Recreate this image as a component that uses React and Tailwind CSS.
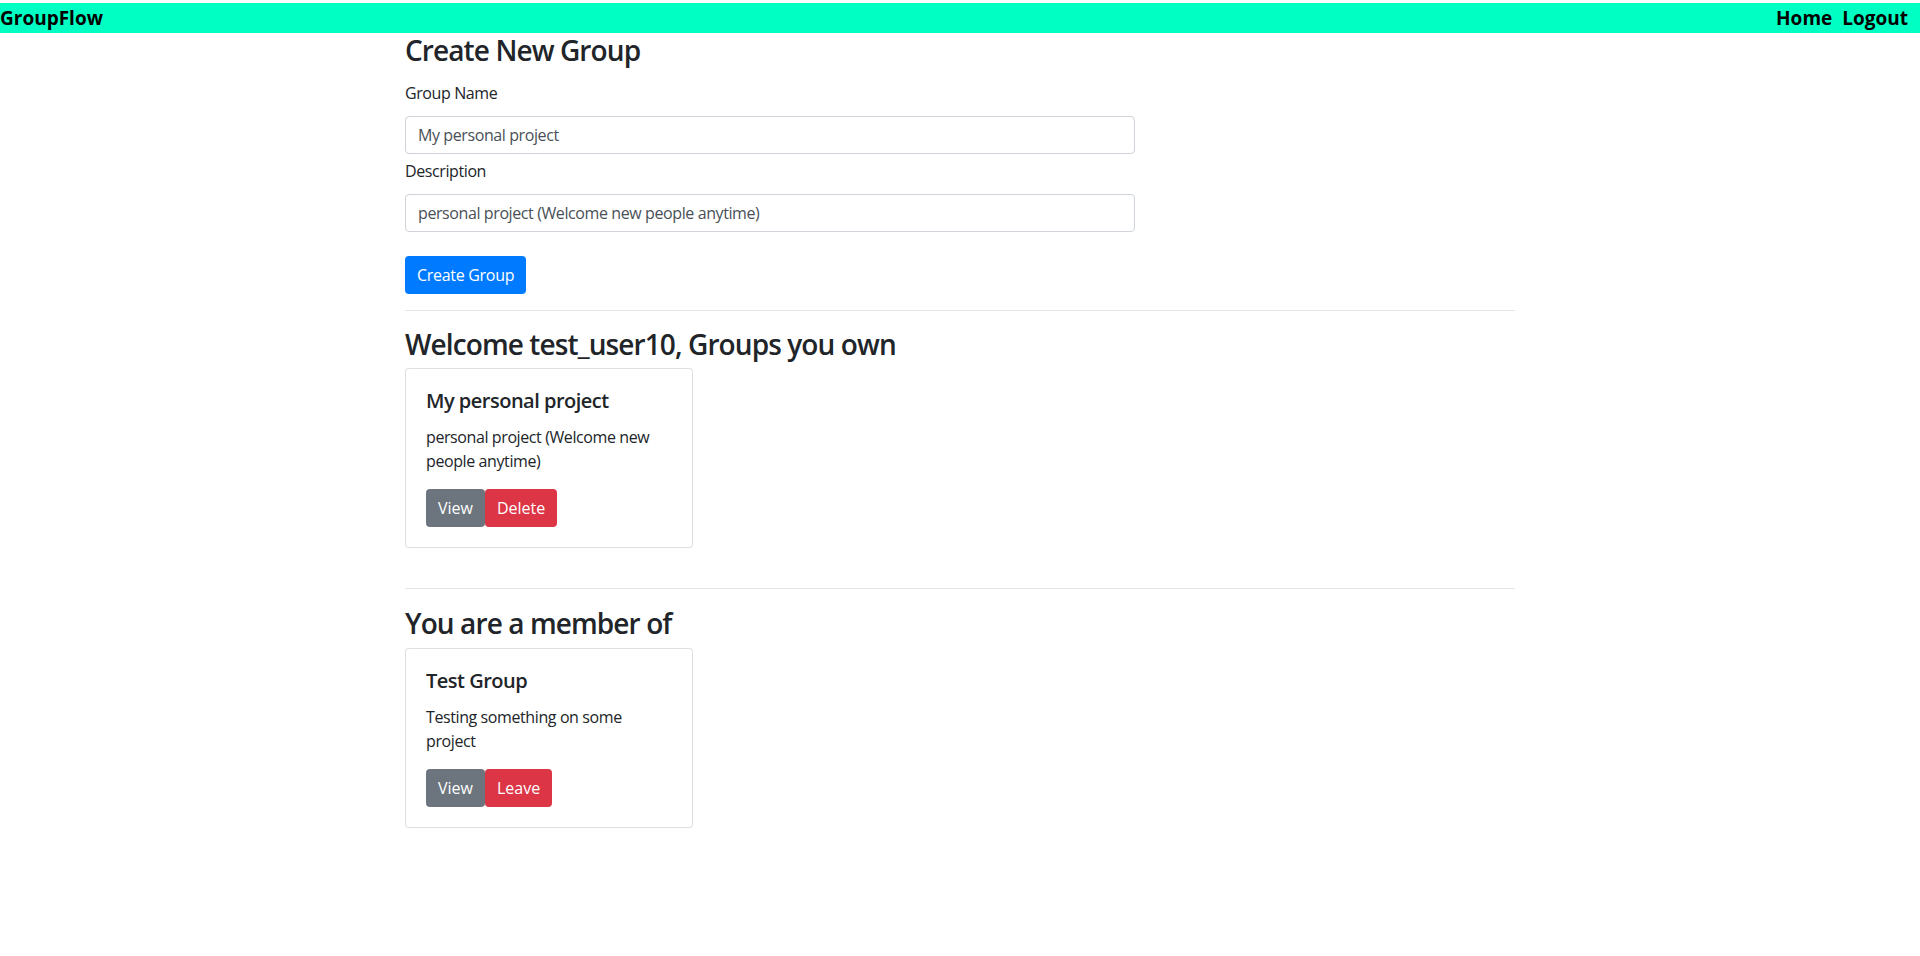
import React from "react";

const groupsOwned = [
    { name: "My personal project", description: "personal project (Welcome new people anytime)", action: "Delete" },
];

const groupsMember = [
    { name: "Test Group", description: "Testing something on some project", action: "Leave" },
];

function GroupCard({ group }) {
    return (
        <div className="w-[288px] rounded border border-black/[0.125] bg-white px-5 py-5">
            <h5 className="mb-3 text-[20px] font-semibold leading-[24px] tracking-[-0.5px] text-[#212529]">{group.name}</h5>
            <p className="mb-4 text-[16px] leading-[24px] tracking-[-0.4px] text-[#212529]">{group.description}</p>
            <div className="flex">
                <button className="h-[38px] rounded bg-[#6c757d] px-3 text-[16px] text-white">View</button>
                <button className="h-[38px] rounded bg-[#dc3545] px-3 text-[16px] text-white">{group.action}</button>
            </div>
        </div>
    );
}

export default function App() {
    return (
        <div className="min-h-screen bg-white font-['Open_Sans',sans-serif] text-[#212529]">
            {/* Navbar */}
            <nav className="mt-[3px] flex h-[30px] items-center justify-between bg-[#00ffc3] pr-3">
                <span className="text-[19px] font-bold text-black">GroupFlow</span>
                <div className="flex gap-[10px] text-[19px] font-bold text-black">
                    <a href="#">Home</a>
                    <a href="#">Logout</a>
                </div>
            </nav>

            <div className="mx-auto w-[1140px] px-[15px]">
                {/* Create form */}
                <div className="w-[730px]">
                    <h3 className="text-[28px] font-semibold leading-[34px] tracking-[-0.9px]">Create New Group</h3>
                    <label className="mt-[14px] mb-[11px] block text-[16px] leading-[24px] tracking-[-0.4px]">Group Name</label>
                    <input
                        className="block h-[38px] w-full rounded border border-[#ced4da] px-3 text-[16px] tracking-[-0.4px] text-[#495057] outline-none"
                        defaultValue="My personal project"
                    />
                    <label className="mt-[5px] mb-[11px] block text-[16px] leading-[24px] tracking-[-0.4px]">Description</label>
                    <input
                        className="block h-[38px] w-full rounded border border-[#ced4da] px-3 text-[16px] tracking-[-0.4px] text-[#495057] outline-none"
                        defaultValue="personal project (Welcome new people anytime)"
                    />
                    <button className="mt-6 h-[38px] rounded bg-[#007bff] px-3 text-[16px] tracking-[-0.3px] text-white">Create Group</button>
                </div>

                <hr className="mt-4 mb-4 border-t border-black/10" />

                {/* Owned */}
                <h3 className="mb-[7px] text-[28px] font-semibold leading-[34px] tracking-[-0.9px]">Welcome test_user10, Groups you own</h3>
                {groupsOwned.map((g) => (
                    <GroupCard key={g.name} group={g} />
                ))}

                <hr className="mt-10 mb-[17px] border-t border-black/10" />

                {/* Member */}
                <h3 className="mb-2 text-[28px] font-semibold leading-[34px] tracking-[-0.9px]">You are a member of</h3>
                {groupsMember.map((g) => (
                    <GroupCard key={g.name} group={g} />
                ))}
            </div>
        </div>
    );
}
